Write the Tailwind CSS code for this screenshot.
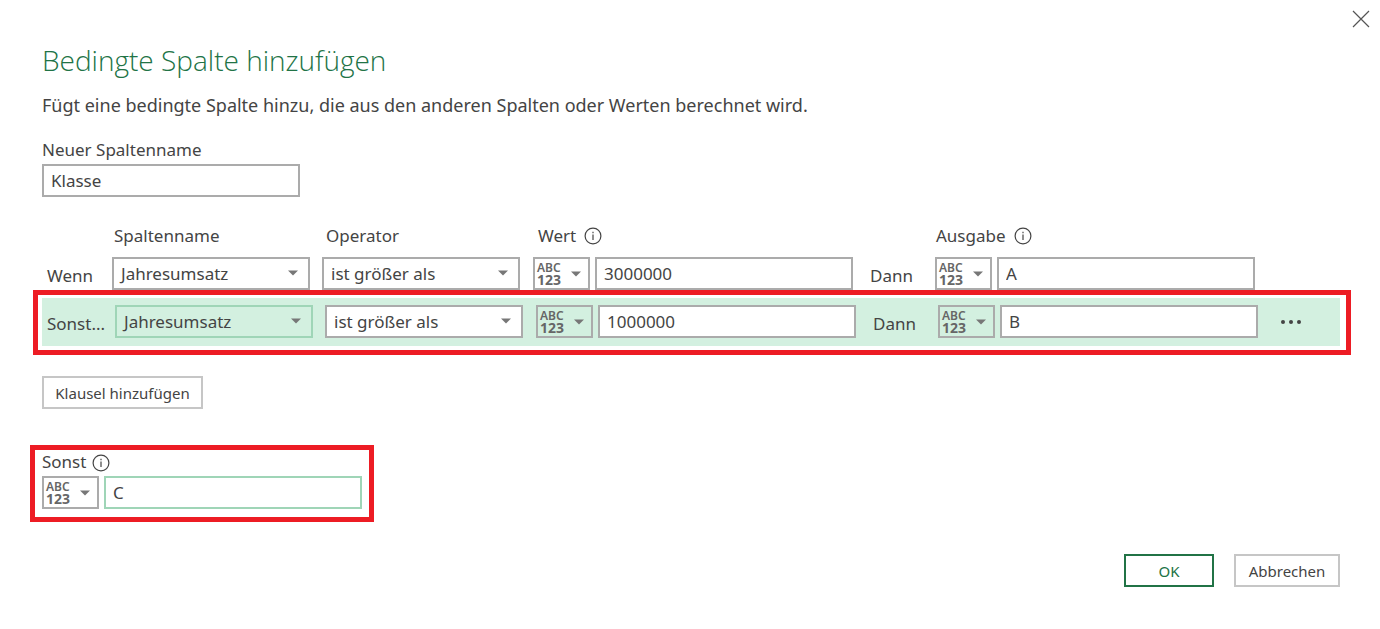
<!DOCTYPE html>
<html lang="de">
<head>
    <meta charset="UTF-8">
    <meta name="viewport" content="width=device-width, initial-scale=1.0">
    <title>Bedingte Spalte hinzufügen</title>
    <script src="https://cdn.jsdelivr.net/npm/@tailwindcss/browser@4"></script>
</head>
<body class="bg-white font-['Noto_Sans','Open_Sans',sans-serif] text-[17px] leading-6 text-[#444444]">
    <!-- Shared icons -->
    <svg class="hidden">
        <symbol id="arrow" viewBox="0 0 10 6">
            <path d="M0 0.5h10L5 5.5z" fill="#777777"/>
        </symbol>
        <symbol id="info" viewBox="0 0 18 18">
            <circle cx="9" cy="9" r="7.9" fill="none" stroke="#444444" stroke-width="1.2"/>
            <path d="M9 7.5v5.5M9 4.8v1.4" stroke="#444444" stroke-width="1.2"/>
        </symbol>
    </svg>

    <form class="relative pt-[42px] pr-10 pb-10 pl-[42px]">
        <button type="button" aria-label="Schließen" class="absolute top-[10px] right-[10px]">
            <svg class="size-[18px]" viewBox="0 0 18 18"><path d="M1 1l16 16M17 1L1 17" stroke="#555555" stroke-width="1.2"/></svg>
        </button>

        <h1 class="font-['Open_Sans','Noto_Sans',sans-serif] text-[28px] leading-9 font-light text-[#217346]">Bedingte Spalte hinzufügen</h1>
        <p class="mt-[15px] text-[18px]">Fügt eine bedingte Spalte hinzu, die aus den anderen Spalten oder Werten berechnet wird.</p>

        <label for="newName" class="mt-[21px] block">Neuer Spaltenname</label>
        <input type="text" id="newName" value="Klasse" class="mt-[2px] block h-[33px] w-[258px] border-2 border-[#ababab] px-[7px]">

        <!-- Column headings -->
        <div class="mt-[27px] flex pl-[72px]">
            <span class="w-[212px]">Spaltenname</span>
            <span class="w-[212px]">Operator</span>
            <span class="flex w-[398px] items-center gap-2">Wert <svg class="size-[18px]"><use href="#info"/></svg></span>
            <span class="flex items-center gap-2">Ausgabe <svg class="size-[18px]"><use href="#info"/></svg></span>
        </div>

        <!-- First clause -->
        <div class="mt-[9px] flex items-center">
            <span class="w-[70px] pt-1 pl-[5px]">Wenn</span>
            <div class="relative mr-3">
                <select aria-label="Spaltenname" class="block h-[33px] w-[198px] appearance-none border-2 border-[#ababab] bg-white px-1 indent-[3px]">
                    <option>Jahresumsatz</option>
                </select>
                <svg class="pointer-events-none absolute top-[13px] right-3 h-[6px] w-[10px]"><use href="#arrow"/></svg>
            </div>
            <div class="relative mr-[13px]">
                <select aria-label="Operator" class="block h-[33px] w-[198px] appearance-none border-2 border-[#ababab] bg-white px-1 indent-[3px]">
                    <option>ist größer als</option>
                </select>
                <svg class="pointer-events-none absolute top-[13px] right-3 h-[6px] w-[10px]"><use href="#arrow"/></svg>
            </div>
            <button type="button" aria-haspopup="menu" class="mr-[5px] flex h-[33px] w-[57px] items-center justify-between border-2 border-[#ababab] pr-[7px] pl-[2px]">
                <span class="text-left leading-3 text-[#666666]"><span class="block text-[12px] font-semibold">ABC</span><span class="block text-[14px] font-bold">123</span></span>
                <svg class="h-[6px] w-[10px]"><use href="#arrow"/></svg>
            </button>
            <input type="text" aria-label="Wert" value="3000000" class="h-[33px] w-[258px] border-2 border-[#ababab] bg-white px-[7px]">
            <span class="w-[82px] pt-1 pl-[17px]">Dann</span>
            <button type="button" aria-haspopup="menu" class="mr-[5px] flex h-[33px] w-[57px] items-center justify-between border-2 border-[#ababab] pr-[7px] pl-[2px]">
                <span class="text-left leading-3 text-[#666666]"><span class="block text-[12px] font-semibold">ABC</span><span class="block text-[14px] font-bold">123</span></span>
                <svg class="h-[6px] w-[10px]"><use href="#arrow"/></svg>
            </button>
            <input type="text" aria-label="Ausgabe" value="A" class="h-[33px] w-[258px] border-2 border-[#ababab] bg-white px-[7px]">
        </div>

        <!-- Second clause, highlighted -->
        <div class="-mr-[11px] -ml-[9px] border-5 border-[#ed1c24] pt-[3px] pr-[6px] pb-1 pl-1">
            <div class="flex items-center bg-[#d3f0e0] pt-[7px] pb-2">
                <span class="w-[73px] pt-1 pl-[5px]">Sonst...</span>
                <div class="relative mr-3">
                    <select aria-label="Spaltenname" class="block h-[33px] w-[198px] appearance-none border-2 border-[#9fd5b7] bg-[#d3f0e0] px-1 indent-[3px]">
                        <option>Jahresumsatz</option>
                    </select>
                    <svg class="pointer-events-none absolute top-[13px] right-3 h-[6px] w-[10px]"><use href="#arrow"/></svg>
                </div>
                <div class="relative mr-[13px]">
                    <select aria-label="Operator" class="block h-[33px] w-[198px] appearance-none border-2 border-[#ababab] bg-white px-1 indent-[3px]">
                        <option>ist größer als</option>
                    </select>
                    <svg class="pointer-events-none absolute top-[13px] right-3 h-[6px] w-[10px]"><use href="#arrow"/></svg>
                </div>
                <button type="button" aria-haspopup="menu" class="mr-[5px] flex h-[33px] w-[57px] items-center justify-between border-2 border-[#ababab] pr-[7px] pl-[2px]">
                    <span class="text-left leading-3 text-[#666666]"><span class="block text-[12px] font-semibold">ABC</span><span class="block text-[14px] font-bold">123</span></span>
                    <svg class="h-[6px] w-[10px]"><use href="#arrow"/></svg>
                </button>
                <input type="text" aria-label="Wert" value="1000000" class="h-[33px] w-[258px] border-2 border-[#ababab] bg-white px-[7px]">
                <span class="w-[82px] pt-1 pl-[17px]">Dann</span>
                <button type="button" aria-haspopup="menu" class="mr-[5px] flex h-[33px] w-[57px] items-center justify-between border-2 border-[#ababab] pr-[7px] pl-[2px]">
                    <span class="text-left leading-3 text-[#666666]"><span class="block text-[12px] font-semibold">ABC</span><span class="block text-[14px] font-bold">123</span></span>
                    <svg class="h-[6px] w-[10px]"><use href="#arrow"/></svg>
                </button>
                <input type="text" aria-label="Ausgabe" value="B" class="h-[33px] w-[258px] border-2 border-[#ababab] bg-white px-[7px]">
                <button type="button" aria-label="Weitere Optionen" class="ml-[22px]">
                    <svg class="h-1 w-[22px]" viewBox="0 0 22 4" fill="#444444"><circle cx="3" cy="2" r="2"/><circle cx="11" cy="2" r="2"/><circle cx="19" cy="2" r="2"/></svg>
                </button>
            </div>
        </div>

        <button type="button" class="mt-[21px] block h-[33px] w-[161px] border-2 border-[#c6c6c6] text-[15px]">Klausel hinzufügen</button>

        <!-- Fallback value -->
        <div class="mt-9 -ml-3 w-fit border-5 border-[#ed1c24] px-[7px] pb-2">
            <label for="otherwise" class="flex items-center gap-[6px]">Sonst <svg class="mt-[2px] size-[18px]"><use href="#info"/></svg></label>
            <div class="mt-[2px] flex gap-[5px]">
                <button type="button" aria-haspopup="menu" class="flex h-[33px] w-[57px] items-center justify-between border-2 border-[#ababab] pr-[7px] pl-[2px]">
                    <span class="text-left leading-3 text-[#666666]"><span class="block text-[12px] font-semibold">ABC</span><span class="block text-[14px] font-bold">123</span></span>
                    <svg class="h-[6px] w-[10px]"><use href="#arrow"/></svg>
                </button>
                <input type="text" id="otherwise" value="C" class="h-[33px] w-[258px] border-2 border-[#9fd5b7] bg-white px-[7px]">
            </div>
        </div>

        <div class="mt-8 flex justify-end gap-5 text-[15px]">
            <button type="submit" class="h-[33px] w-[90px] border-2 border-[#217346] text-[#217346]">OK</button>
            <button type="button" class="h-[33px] w-[106px] border-2 border-[#c6c6c6]">Abbrechen</button>
        </div>
    </form>
</body>
</html>
